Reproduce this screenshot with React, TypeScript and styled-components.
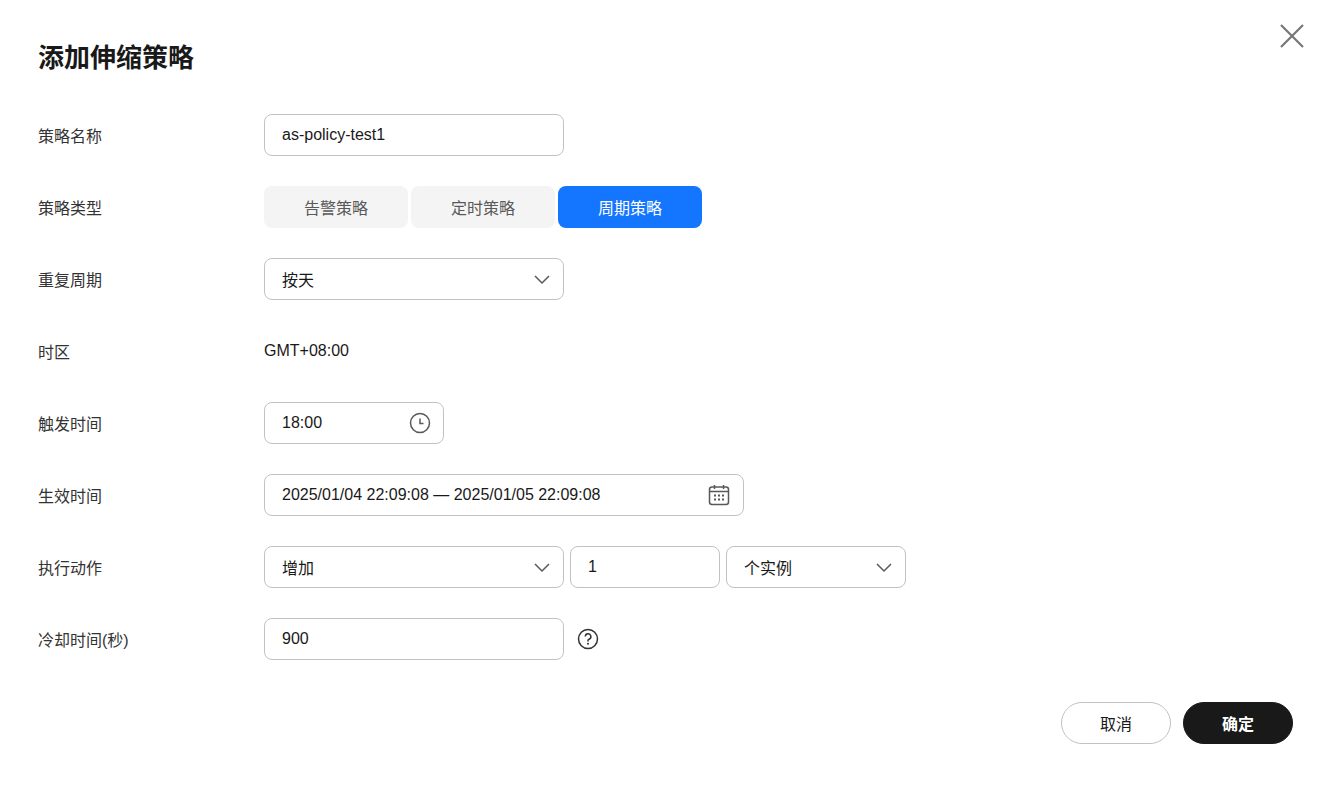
import React from "react";
import styled, { createGlobalStyle } from "styled-components";

const Global = createGlobalStyle`
  body { margin: 0; background: #fff; font-family: "Liberation Sans", "Noto Sans CJK SC", sans-serif; color: #191919; }
`;

const Dialog = styled.div`
  position: relative; width: 1329px; height: 786px; box-sizing: border-box; padding: 40px 36px 0 38px;
`;
const Title = styled.h1`
  margin: 0; font-size: 26px; font-weight: 700; line-height: 36px; height: 36px;
`;
const Close = styled.button`
  position: absolute; top: 22px; right: 23px; width: 28px; height: 28px; border: none; background: none; padding: 0; cursor: pointer;
`;
const Form = styled.div`
  display: flex; flex-direction: column; gap: 30px; margin-top: 38px;
`;
const Row = styled.div`
  display: flex; align-items: center; height: 42px;
`;
const Label = styled.div`
  width: 226px; font-size: 16px; color: #333;
`;
const Field = styled.div<{ w: number }>`
  width: ${p => p.w}px; height: 42px; box-sizing: border-box; border: 1px solid #c2c2c2; border-radius: 8px;
  display: flex; align-items: center; justify-content: space-between; padding: 0 12px 0 17px; font-size: 16px; color: #191919;
`;
const Seg = styled.div`display: flex; gap: 3px;`;
const SegBtn = styled.div<{ active?: boolean }>`
  width: 144px; height: 42px; border-radius: 8px; display: flex; align-items: center; justify-content: center; font-size: 16px;
  background: ${p => (p.active ? "#1476ff" : "#f4f4f4")}; color: ${p => (p.active ? "#fff" : "#595959")};
`;
const Text = styled.div`font-size: 16px;`;
const Group = styled.div`display: flex; gap: 6px; align-items: center;`;
const Help = styled.div`margin-left: 13px; display: flex;`;
const Footer = styled.div`display: flex; justify-content: flex-end; gap: 12px; margin-top: 42px;`;
const Btn = styled.button<{ primary?: boolean }>`
  width: 110px; height: 42px; border-radius: 21px; font-size: 16px; font-family: inherit; cursor: pointer;
  border: 1px solid ${p => (p.primary ? "#191919" : "#c2c2c2")};
  background: ${p => (p.primary ? "#191919" : "#fff")}; color: ${p => (p.primary ? "#fff" : "#191919")};
  font-weight: ${p => (p.primary ? 700 : 400)};
`;

const Chevron = () => (
  <svg width="18" height="18" viewBox="0 0 18 18"><path d="M2 6l7 7 7-7" fill="none" stroke="#595959" strokeWidth="1.5" /></svg>
);
const Clock = () => (
  <svg width="22" height="22" viewBox="0 0 22 22"><circle cx="11" cy="11" r="9.5" fill="none" stroke="#595959" strokeWidth="1.5" /><path d="M11 6.5V11.5H14.5" fill="none" stroke="#595959" strokeWidth="1.5" /></svg>
);
const Cal = () => (
  <svg width="24" height="24" viewBox="0 0 24 24">
    <rect x="2.5" y="4" width="19" height="17.5" rx="2.5" fill="none" stroke="#595959" strokeWidth="1.5" />
    <path d="M7.5 2v4M16.5 2v4M2.5 8.5h19" stroke="#595959" strokeWidth="1.5" />
    {[8, 12, 16].map(x => [12.5, 16.5].map(y => <rect key={x + "-" + y} x={x - 1} y={y - 1} width="2" height="2" fill="#595959" />))}
  </svg>
);

export default function App() {
  return (
    <Dialog>
      <Global />
      <Title>添加伸缩策略</Title>
      <Close aria-label="close">
        <svg width="28" height="28" viewBox="0 0 28 28"><path d="M3 3l22 22M25 3L3 25" stroke="#777" strokeWidth="2.2" /></svg>
      </Close>
      <Form>
        <Row><Label>策略名称</Label><Field w={300}>as-policy-test1</Field></Row>
        <Row><Label>策略类型</Label><Seg><SegBtn>告警策略</SegBtn><SegBtn>定时策略</SegBtn><SegBtn active>周期策略</SegBtn></Seg></Row>
        <Row><Label>重复周期</Label><Field w={300}>按天<Chevron /></Field></Row>
        <Row><Label>时区</Label><Text>GMT+08:00</Text></Row>
        <Row><Label>触发时间</Label><Field w={180}>18:00<Clock /></Field></Row>
        <Row><Label>生效时间</Label><Field w={480}>2025/01/04 22:09:08 — 2025/01/05 22:09:08<Cal /></Field></Row>
        <Row><Label>执行动作</Label><Group><Field w={300}>增加<Chevron /></Field><Field w={150}>1</Field><Field w={180}>个实例<Chevron /></Field></Group></Row>
        <Row><Label>冷却时间(秒)</Label><Field w={300}>900</Field>
          <Help><svg width="22" height="22" viewBox="0 0 22 22"><circle cx="11" cy="11" r="9.5" fill="none" stroke="#333" strokeWidth="1.5" /><path d="M8.3 8.6a2.8 2.8 0 1 1 3.8 2.6c-.8.3-1.1.8-1.1 1.6v.8" fill="none" stroke="#333" strokeWidth="1.5" /><circle cx="11" cy="15.8" r="1" fill="#333" /></svg></Help>
        </Row>
      </Form>
      <Footer><Btn>取消</Btn><Btn primary>确定</Btn></Footer>
    </Dialog>
  );
}
